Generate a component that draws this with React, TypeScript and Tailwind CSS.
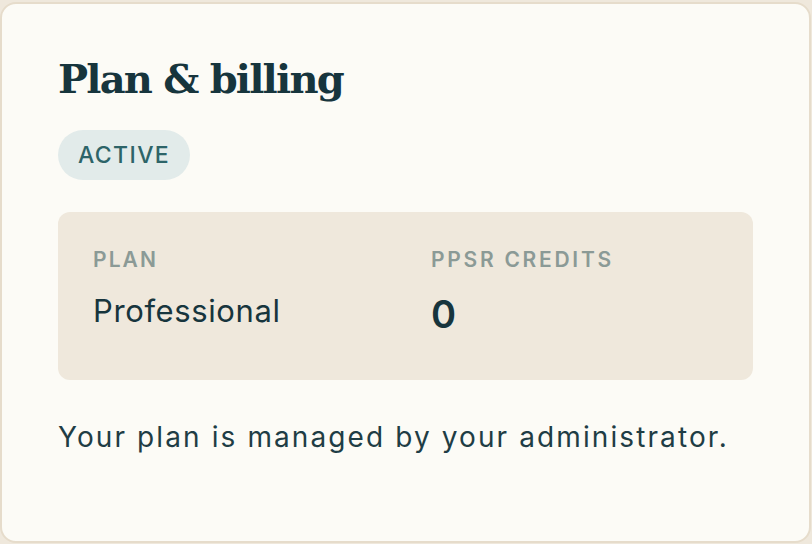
export default function App() {
  return (
    <div className="h-[544px] w-[812px] bg-[#efe8dc] pt-[2px] pr-[1px] pb-[1px]" style={{ fontFamily: 'Inter, "Noto Sans", sans-serif' }}>
      <div className="h-full rounded-2xl border-2 border-[#e6dccb] bg-[#fcfbf6] pl-[56px] pr-[56px] pt-[49px]">
        {/* Heading */}
        <h1
          className="text-[40px] leading-[52px] font-bold tracking-[-0.045em] text-[#17353d]"
          style={{ fontFamily: '"DejaVu Serif", "Liberation Serif", serif' }}
        >
          Plan &amp; billing
        </h1>

        {/* Status badge */}
        <div className="mt-[25px]">
          <span className="inline-flex h-[50px] items-center rounded-full bg-[#e2ebea] px-[20px] text-[23px] font-medium tracking-[0.06em] text-[#2d6468]">
            ACTIVE
          </span>
        </div>

        {/* Plan summary */}
        <div className="mt-[32px] grid grid-cols-2 gap-x-[51px] rounded-xl bg-[#efe8dc] pl-[35px] pr-[35px] pt-[34px] pb-[42px]">
          <div>
            <div className="text-[21px] leading-[28px] font-semibold tracking-[0.1em] text-[#8b9a96]">PLAN</div>
            <div className="mt-[13px] text-[31px] leading-[48px] tracking-[0.02em] text-[#17353d]">Professional</div>
          </div>
          <div>
            <div className="text-[21px] leading-[28px] font-semibold tracking-[0.13em] text-[#8b9a96]">PPSR CREDITS</div>
            <div className="mt-[16px] text-[38px] leading-[48px] font-semibold text-[#17353d]">0</div>
          </div>
        </div>

        <p className="mt-[39px] text-[28px] leading-[36px] tracking-[0.075em] text-[#1f3d45]">
          Your plan is managed by your administrator.
        </p>
      </div>
    </div>
  );
}
